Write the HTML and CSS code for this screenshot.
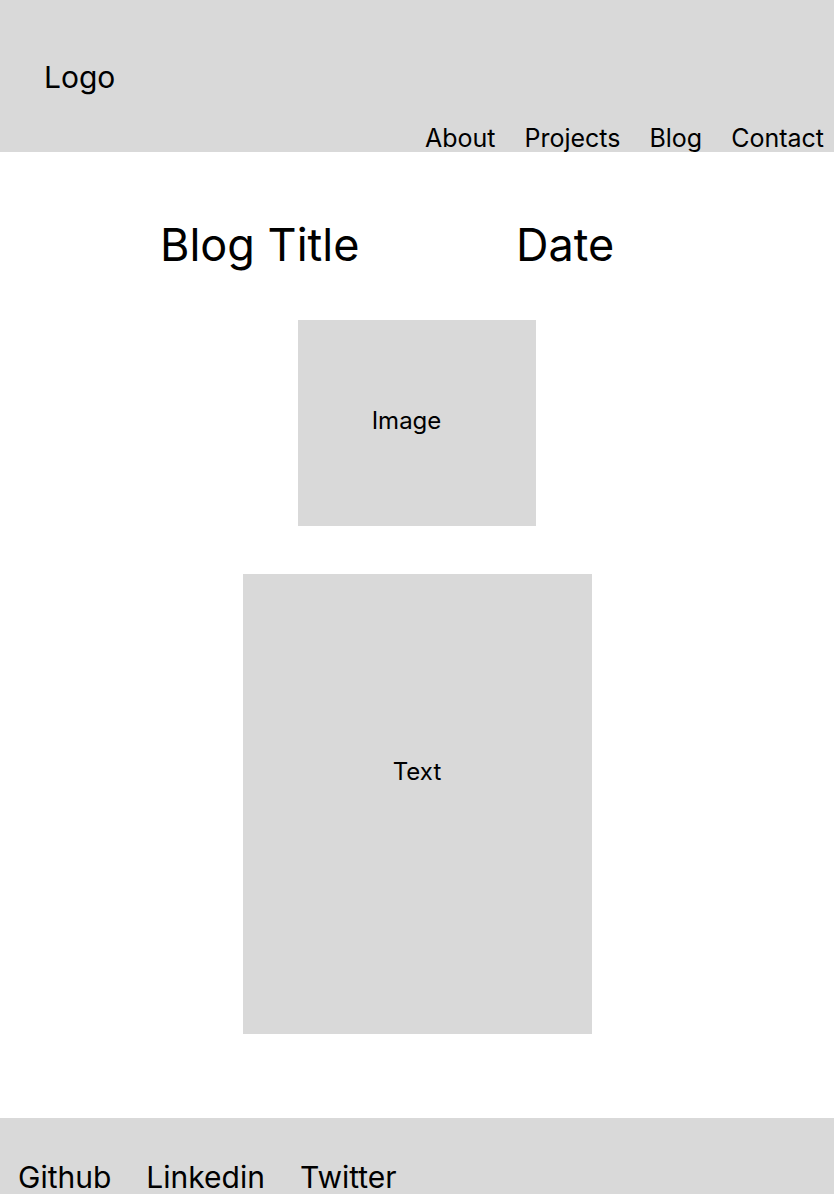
FILE: index.html
```html
<!DOCTYPE html>
<html lang="en">
<head>
<meta charset="utf-8">
<title>Blog Post</title>
<link rel="stylesheet" href="styles.css">
</head>
<body>
<header class="site-header">
  <div class="logo">Logo</div>
  <nav class="nav">
    <a href="#">About</a>
    <a href="#">Projects</a>
    <a href="#">Blog</a>
    <a href="#">Contact</a>
  </nav>
</header>
<main class="post">
  <div class="post-head">
    <h1 class="post-title">Blog Title</h1>
    <div class="post-date">Date</div>
  </div>
  <div class="post-image"><span>Image</span></div>
  <div class="post-text"><span>Text</span></div>
</main>
<footer class="site-footer">
  <a href="#">Github</a>
  <a href="#">Linkedin</a>
  <a href="#">Twitter</a>
</footer>
</body>
</html>
```

FILE: styles.css
```css
* { box-sizing: border-box; }
html, body { margin: 0; padding: 0; }
body {
  font-family: Inter, "Noto Sans", "Liberation Sans", sans-serif;
  color: #000;
  background: #fff;
  width: 834px;
  height: 1194px;
  overflow: hidden;
}
a { color: inherit; text-decoration: none; }

.site-header {
  background: #d9d9d9;
  height: 152px;
  padding-top: 59px;
  display: flex;
  flex-direction: column;
  justify-content: space-between;
}
.logo {
  font-size: 30px;
  line-height: normal;
  padding-left: 44px;
}
.nav {
  align-self: flex-end;
  display: flex;
  gap: 29px;
  padding-right: 10px;
  font-size: 25px;
  line-height: normal;
  margin-bottom: -1px;
}

.post {
  display: flex;
  flex-direction: column;
  align-items: center;
}
.post-head {
  align-self: stretch;
  display: flex;
  padding-left: 160px;
  margin-top: 65px;
  font-size: 45px;
  line-height: normal;
}
.post-title {
  margin: 0;
  font-size: inherit;
  font-weight: 400;
  width: 356px;
}
.post-image {
  margin-top: 48px;
  width: 238px;
  height: 206px;
  background: #d9d9d9;
  display: flex;
  align-items: center;
  justify-content: center;
  padding: 0 21px 5px 0;
  font-size: 24px;
}
.post-text {
  margin-top: 48px;
  width: 349px;
  height: 460px;
  background: #d9d9d9;
  display: flex;
  justify-content: center;
  padding-top: 183px;
  font-size: 24px;
  line-height: normal;
}

.site-footer {
  margin-top: 84px;
  height: 76px;
  background: #d9d9d9;
  display: flex;
  gap: 35px;
  padding: 41px 0 0 18px;
  font-size: 30px;
  line-height: normal;
}
```
